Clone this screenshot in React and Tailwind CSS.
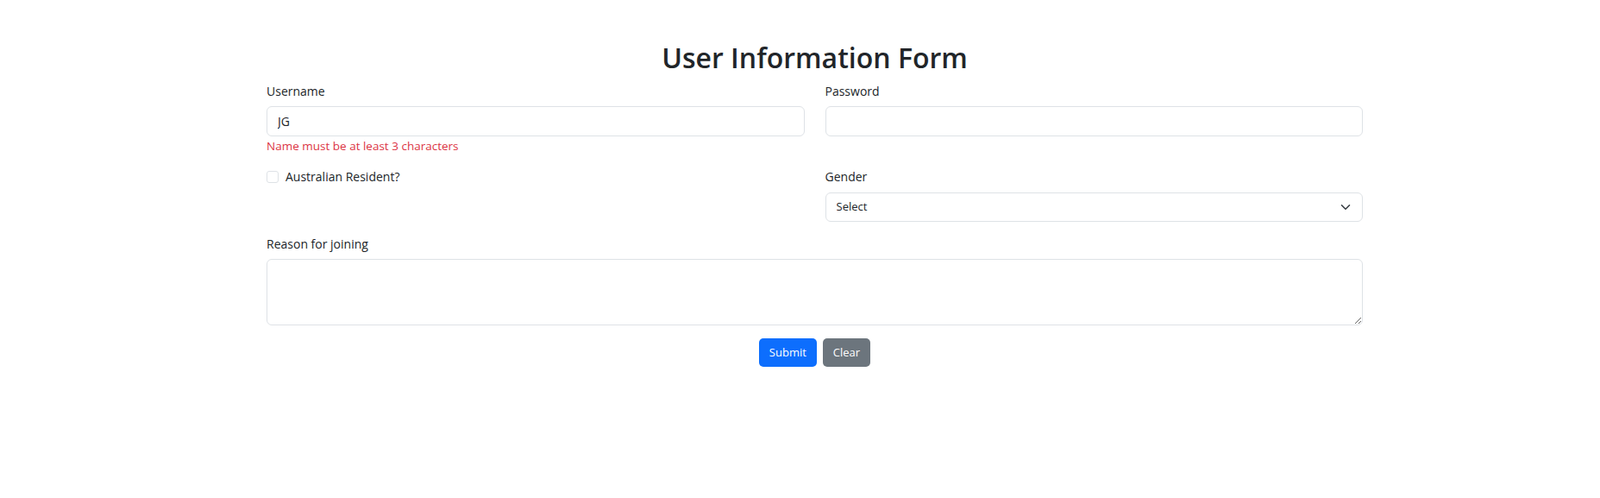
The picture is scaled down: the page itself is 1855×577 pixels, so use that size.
import React, { useState } from 'react';

function App() {
  const [username, setUsername] = useState('JG');
  const [password, setPassword] = useState('');
  const [resident, setResident] = useState(false);
  const [gender, setGender] = useState('');
  const [reason, setReason] = useState('');

  const handleClear = () => {
    setUsername('');
    setPassword('');
    setResident(false);
    setGender('');
    setReason('');
  };

  return (
    <div className="min-h-screen bg-white flex justify-center pl-[34px] text-[#212529] font-['Open_Sans',sans-serif]">
      <div className="w-[1271px] pt-[47px]">
        {/* Title */}
        <h1 className="text-center text-[32px] leading-[40px] font-semibold mb-[8px]">User Information Form</h1>

        <form onSubmit={(e) => e.preventDefault()}>
          <div className="grid grid-cols-2 gap-x-6 gap-y-4">
            {/* Username */}
            <div>
              <label className="block text-[14px] leading-[21px] mb-[7px]">Username</label>
              <input
                type="text"
                value={username}
                onChange={(e) => setUsername(e.target.value)}
                className="block w-full h-[35px] px-3 text-[14px] border border-[#dee2e6] rounded-[6px] outline-none"
              />
              {username.length < 3 && (
                <p className="mt-[2px] text-[13.5px] leading-[18px] text-[#dc3545]">Name must be at least 3 characters</p>
              )}
            </div>

            {/* Password */}
            <div>
              <label className="block text-[14px] leading-[21px] mb-[7px]">Password</label>
              <input
                type="password"
                value={password}
                onChange={(e) => setPassword(e.target.value)}
                className="block w-full h-[35px] px-3 text-[14px] border border-[#dee2e6] rounded-[6px] outline-none"
              />
            </div>

            {/* Resident checkbox */}
            <div className="flex items-center gap-2 h-[21px]">
              <input
                type="checkbox"
                checked={resident}
                onChange={(e) => setResident(e.target.checked)}
                className="appearance-none w-[14px] h-[14px] border border-[#dee2e6] rounded-[3px] bg-white checked:bg-[#0d6efd] checked:border-[#0d6efd]"
              />
              <label className="text-[14px] leading-[21px]">Australian Resident?</label>
            </div>

            {/* Gender */}
            <div>
              <label className="block text-[14px] leading-[21px] mb-[8px]">Gender</label>
              <div className="relative">
                <select
                  value={gender}
                  onChange={(e) => setGender(e.target.value)}
                  className="block w-full h-[34px] pl-3 pr-9 text-[13px] border border-[#dee2e6] rounded-[6px] bg-white appearance-none outline-none"
                >
                  <option value="">Select</option>
                  <option value="male">Male</option>
                  <option value="female">Female</option>
                  <option value="other">Other</option>
                </select>
                <svg
                  className="pointer-events-none absolute right-[12px] top-[11px]"
                  width="16"
                  height="12"
                  viewBox="0 0 16 16"
                  fill="none"
                  stroke="#343a40"
                  strokeWidth="2"
                  strokeLinecap="round"
                  strokeLinejoin="round"
                >
                  <path d="m2 5 6 6 6-6" />
                </svg>
              </div>
            </div>

            {/* Reason */}
            <div className="col-span-2">
              <label className="block text-[14px] leading-[21px] mb-[7px] -mt-px">Reason for joining</label>
              <textarea
                value={reason}
                onChange={(e) => setReason(e.target.value)}
                className="block w-full h-[77px] px-3 py-[6px] text-[14px] border border-[#dee2e6] rounded-[6px] outline-none"
              />
            </div>
          </div>

          {/* Buttons */}
          <div className="flex justify-center gap-[7px] mt-[15px]">
            <button type="submit" className="h-[33px] px-3 text-[13px] font-medium text-white bg-[#0d6efd] rounded-[5px]">
              Submit
            </button>
            <button type="button" onClick={handleClear} className="h-[33px] px-3 text-[13px] font-medium text-white bg-[#6c757d] rounded-[5px]">
              Clear
            </button>
          </div>
        </form>
      </div>
    </div>
  );
}

export default App;
